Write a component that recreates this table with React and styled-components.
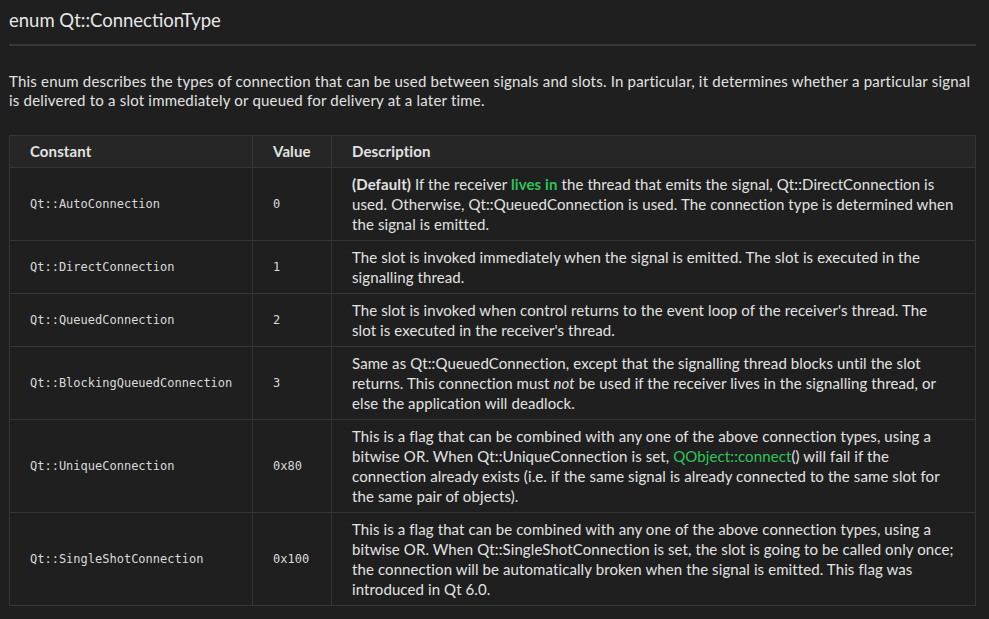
import React from "react";
import styled, { createGlobalStyle } from "styled-components";

const GlobalStyle = createGlobalStyle`
  html, body {
    margin: 0;
    background: #1f1f1f;
  }
  body {
    font-family: "Lato", "Open Sans", sans-serif;
    color: #e2e2e2;
  }
`;

const Page = styled.div`
  width: 967px;
  padding: 6px 0 0 9px;
`;

const Title = styled.h2`
  margin: 0;
  padding-bottom: 10px;
  border-bottom: 2px solid #383838;
  font-size: 18.5px;
  font-weight: 400;
  line-height: 28px;
  color: #e6e6e6;
`;

const Intro = styled.p`
  margin: 26px 0 25px;
  font-size: 15px;
  line-height: 19px;
  letter-spacing: 0.2px;
`;

const Table = styled.table`
  width: 100%;
  table-layout: fixed;
  border-collapse: collapse;
  border: 1px solid #363636;
  font-size: 15px;
  letter-spacing: 0.1px;
`;

const Head = styled.th`
  text-align: left;
  font-weight: 700;
  background: #262626;
  padding: 5px 20px 6px;
  line-height: 20px;
  border: 1px solid #363636;
  width: ${(p) => p.$w || "auto"};
`;

const Cell = styled.td`
  padding: 6px 20px;
  line-height: 20px;
  border: 1px solid #363636;
  vertical-align: middle;
  font-family: ${(p) => (p.$mono ? '"DejaVu Sans Mono", monospace' : "inherit")};
  font-size: ${(p) => (p.$mono ? "12px" : "15px")};
  letter-spacing: ${(p) => (p.$mono ? "0" : "0.1px")};
  color: ${(p) => (p.$mono ? "#dadada" : "#e2e2e2")};
`;

const Link = styled.span`
  color: #2dc55c;
  font-weight: ${(p) => (p.$bold ? 700 : 400)};
`;

const rows = [
  {
    name: "Qt::AutoConnection",
    value: "0",
    desc: (
      <>
        <b>(Default)</b> If the receiver <Link $bold>lives in</Link> the thread
        that emits the signal, Qt::DirectConnection is used. Otherwise,
        Qt::QueuedConnection is used. The connection type is determined when
        the signal is emitted.
      </>
    ),
  },
  {
    name: "Qt::DirectConnection",
    value: "1",
    desc: "The slot is invoked immediately when the signal is emitted. The slot is executed in the signalling thread.",
  },
  {
    name: "Qt::QueuedConnection",
    value: "2",
    desc: "The slot is invoked when control returns to the event loop of the receiver's thread. The slot is executed in the receiver's thread.",
  },
  {
    name: "Qt::BlockingQueuedConnection",
    value: "3",
    desc: (
      <>
        Same as Qt::QueuedConnection, except that the signalling thread blocks
        until the slot returns. This connection must <i>not</i> be used if the
        receiver lives in the signalling thread, or else the application will
        deadlock.
      </>
    ),
  },
  {
    name: "Qt::UniqueConnection",
    value: "0x80",
    desc: (
      <>
        This is a flag that can be combined with any one of the above connection
        types, using a bitwise OR. When Qt::UniqueConnection is set,{" "}
        <Link>QObject::connect</Link>() will fail if the connection already
        exists (i.e. if the same signal is already connected to the same slot
        for the same pair of objects).
      </>
    ),
  },
  {
    name: "Qt::SingleShotConnection",
    value: "0x100",
    desc: "This is a flag that can be combined with any one of the above connection types, using a bitwise OR. When Qt::SingleShotConnection is set, the slot is going to be called only once; the connection will be automatically broken when the signal is emitted. This flag was introduced in Qt 6.0.",
  },
];

export default function App() {
  return (
    <Page>
      <GlobalStyle />
      <Title>enum Qt::ConnectionType</Title>
      <Intro>
        This enum describes the types of connection that can be used between
        signals and slots. In particular, it determines whether a particular
        signal is delivered to a slot immediately or queued for delivery at a
        later time.
      </Intro>
      <Table>
        <thead>
          <tr>
            <Head $w="202px">Constant</Head>
            <Head $w="38px">Value</Head>
            <Head>Description</Head>
          </tr>
        </thead>
        <tbody>
          {rows.map((r) => (
            <tr key={r.name}>
              <Cell $mono>{r.name}</Cell>
              <Cell $mono>{r.value}</Cell>
              <Cell>{r.desc}</Cell>
            </tr>
          ))}
        </tbody>
      </Table>
    </Page>
  );
}
